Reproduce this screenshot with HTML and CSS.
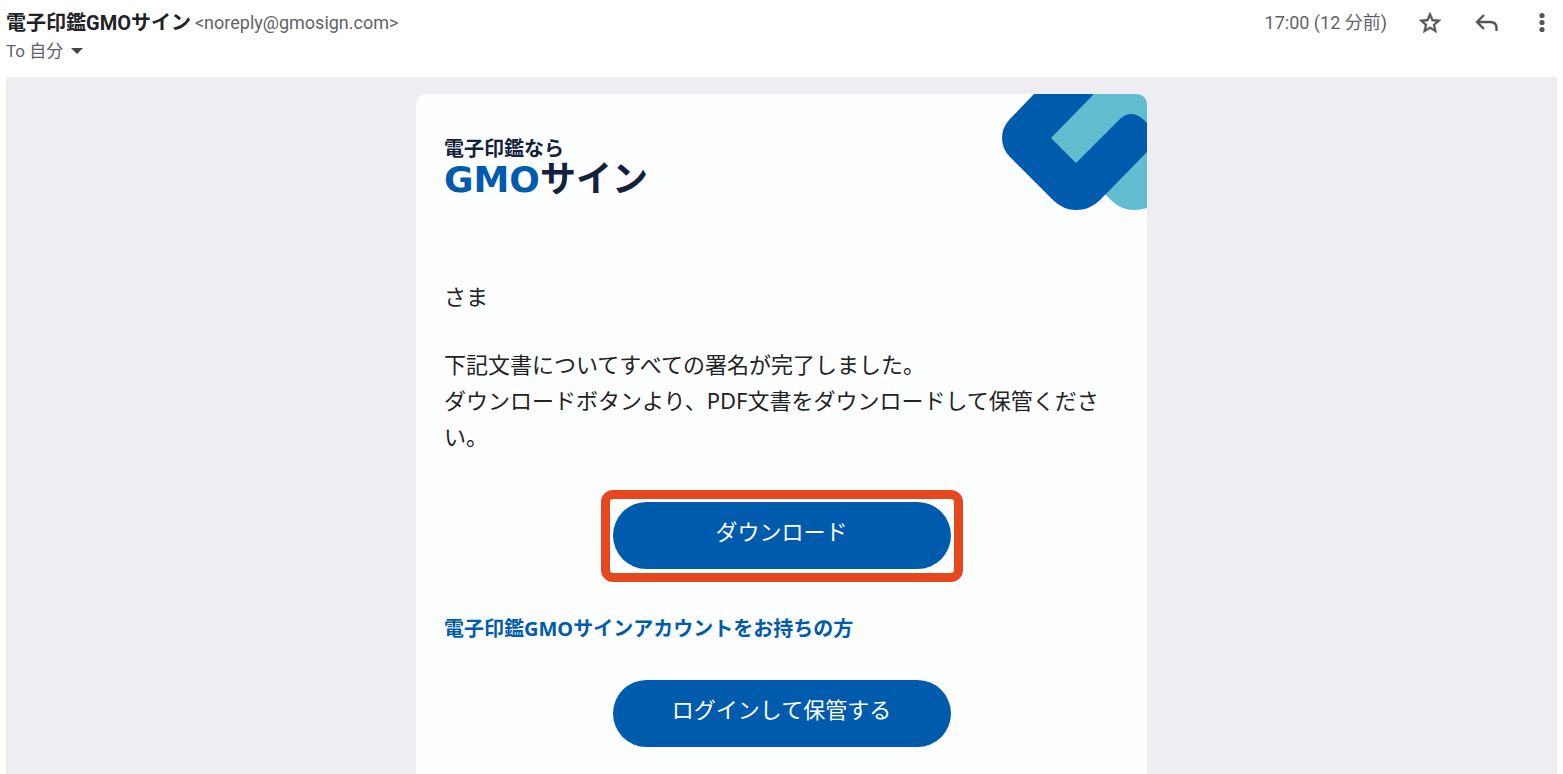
FILE: index.html
```
<!DOCTYPE html>
<html lang="ja">
<head>
  <meta charset="UTF-8" />
  <meta name="viewport" content="width=device-width, initial-scale=1.0" />
  <title>電子印鑑GMOサイン</title>
  <link rel="stylesheet" href="styles.css">
</head>
<body>
  <header class="mail-header">
    <div class="sender">
      <div class="sender-line">
        <span class="sender-name">電子印鑑GMOサイン</span>
        <span class="sender-address">&lt;noreply@gmosign.com&gt;</span>
      </div>
      <button type="button" class="recipient">
        To 自分
        <svg width="12" height="6" viewBox="0 0 12 6" aria-hidden="true"><path d="M0 0h12L6 6z" fill="#444"/></svg>
      </button>
    </div>
    <div class="mail-actions">
      <span class="mail-time">17:00 (12 分前)</span>
      <button type="button" class="icon-btn" aria-label="スター">
        <svg width="26" height="26" viewBox="0 0 24 24"><path fill="#555" stroke="#555" stroke-width=".5" d="M22 9.24l-7.19-.62L12 2 9.19 8.63 2 9.24l5.46 4.73L5.82 21 12 17.27 18.18 21l-1.63-7.03L22 9.24zM12 15.4l-3.76 2.27 1-4.28-3.32-2.88 4.38-.38L12 6.1l1.71 4.04 4.38.38-3.32 2.88 1 4.28L12 15.4z"/></svg>
      </button>
      <button type="button" class="icon-btn" aria-label="返信">
        <svg width="26" height="26" viewBox="0 0 26 26" fill="none" stroke="#555" stroke-width="2.4"><path d="M11 5l-7 7 7 7M4.500 12H17q6.500 0 6.500 6v3"/></svg>
      </button>
      <button type="button" class="icon-btn" aria-label="その他">
        <svg width="26" height="26" viewBox="0 0 26 26" fill="#555"><circle cx="13" cy="5.500" r="2.600"/><circle cx="13" cy="12.500" r="2.600"/><circle cx="13" cy="19.500" r="2.600"/></svg>
      </button>
    </div>
  </header>

  <main class="mail-body">
    <article class="card">
      <svg class="card-mark" width="145" height="116" viewBox="0 0 145 116" aria-hidden="true">
        <path fill="#62bdd0" d="M92 0H145V114Q139 116 133 116Q119 116 110 107L103 100L40 44z"/>
        <path fill="#005bac" d="M32 0H92L49 44L74 69L116 27Q122 20 129 20Q137 20 145 29V58L98 106Q88 116 74 116Q61 116 51 106L8 63Q0 55 0 44Q0 34 7 26z"/>
      </svg>

      <div class="logo">
        <span class="logo-lead">電子印鑑なら</span>
        <span class="logo-name"><span class="logo-gmo">GMO</span>サイン</span>
      </div>

      <p class="greeting">さま</p>
      <p class="message">下記文書についてすべての署名が完了しました。<br>ダウンロードボタンより、PDF文書をダウンロードして保管ください。</p>

      <div class="highlight">
        <button type="button" class="btn">ダウンロード</button>
      </div>

      <h2 class="account-title">電子印鑑GMOサインアカウントをお持ちの方</h2>
      <button type="button" class="btn">ログインして保管する</button>
    </article>
  </main>
</body>
</html>
```

FILE: styles.css
```
* {
  box-sizing: border-box;
}
body {
  display: flex;
  flex-direction: column;
  min-height: 100vh;
  margin: 0;
  padding: 0 6px;
  background: #fff;
  color: #222;
  font-family: "Noto Sans", "Noto Sans CJK JP", sans-serif;
}
button {
  border: none;
  font-family: inherit;
  cursor: pointer;
}

/* header */
.mail-header {
  display: flex;
  justify-content: space-between;
  align-items: flex-start;
  padding: 9px 2px 12px 0;
  color: #5f6368;
  font-family: Roboto, "Noto Sans CJK JP", sans-serif;
  font-size: 18px;
}
.sender-line {
  display: flex;
  align-items: center;
  gap: 4px;
  line-height: 28px;
}
.sender-name {
  color: #202124;
  font-size: 20px;
  font-weight: bold;
}
.recipient {
  display: flex;
  align-items: center;
  gap: 8px;
  padding: 0;
  background: none;
  color: inherit;
  font-size: 17px;
  line-height: 28px;
}
.mail-actions {
  display: flex;
  align-items: center;
  gap: 30px;
  line-height: 28px;
}
.icon-btn {
  display: flex;
  padding: 0;
  background: none;
}

/* mail content */
.mail-body {
  display: flex;
  flex: 1;
  justify-content: center;
  padding-top: 17px;
  background: #eeedf2;
}
.card {
  position: relative;
  width: 100%;
  max-width: 731px;
  padding: 41px 28px 27px;
  overflow: hidden;
  border-radius: 10px 10px 0 0;
  background: #fdfeff;
}
.card-mark {
  position: absolute;
  top: 0;
  right: 0;
}
.logo {
  display: flex;
  flex-direction: column;
  color: #14213d;
  font-weight: bold;
}
.logo-lead {
  font-size: 20px;
  line-height: 28px;
}
.logo-name {
  font-size: 36px;
  line-height: 32px;
}
.logo-gmo {
  color: #005bac;
  font-family: "DejaVu Sans", sans-serif;
}
.greeting,
.message {
  margin: 0;
  font-size: 22px;
  line-height: 36px;
}
.greeting {
  margin-top: 82px;
}
.message {
  margin-top: 32px;
}
.btn {
  display: block;
  width: 338px;
  height: 67px;
  margin: 0 auto;
  padding: 0 0 12px;
  border-radius: 34px;
  background: #005bac;
  color: #fff;
  font-size: 22px;
}
.highlight {
  width: fit-content;
  margin: 36px auto 0;
  padding: 3px 3px 4px;
  border: 9px solid #e6471d;
  border-radius: 12px;
}
.account-title {
  margin: 31px 0 35px;
  color: #005bac;
  font-size: 20px;
  line-height: 32px;
}
```
